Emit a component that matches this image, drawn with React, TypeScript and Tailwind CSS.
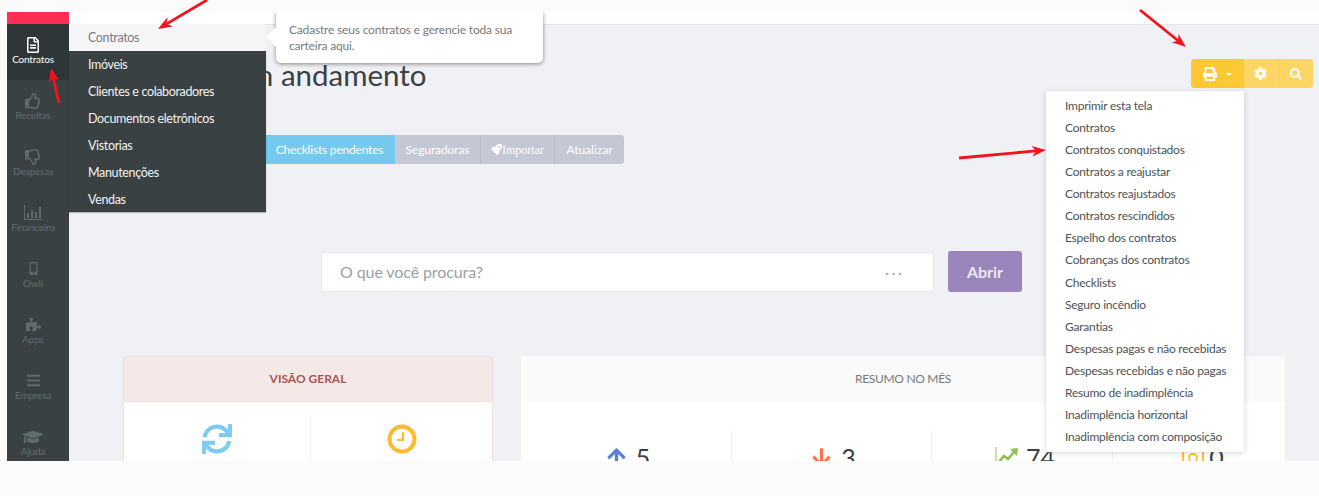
import {
  FaArrowDown,
  FaArrowUp,
  FaBars,
  FaCog,
  FaGraduationCap,
  FaMobileAlt,
  FaPrint,
  FaPuzzlePiece,
  FaRegFileAlt,
  FaRegThumbsDown,
  FaRegThumbsUp,
  FaRocket,
  FaSearch,
  FaSync,
} from "react-icons/fa";

const flyoutItems = [
  "Imóveis",
  "Clientes e colaboradores",
  "Documentos eletrônicos",
  "Vistorias",
  "Manutenções",
  "Vendas",
];

const reportItems = [
  "Imprimir esta tela",
  "Contratos",
  "Contratos conquistados",
  "Contratos a reajustar",
  "Contratos reajustados",
  "Contratos rescindidos",
  "Espelho dos contratos",
  "Cobranças dos contratos",
  "Checklists",
  "Seguro incêndio",
  "Garantias",
  "Despesas pagas e não recebidas",
  "Despesas recebidas e não pagas",
  "Resumo de inadimplência",
  "Inadimplência horizontal",
  "Inadimplência com composição",
];

function BarsIcon() {
  return (
    <svg width="18" height="15" viewBox="0 0 18 15" fill="currentColor">
      <rect x="0" y="0" width="1" height="15" />
      <rect x="0" y="14" width="18" height="1" />
      <rect x="3" y="8" width="2" height="5" />
      <rect x="7" y="5" width="2" height="8" />
      <rect x="11" y="7" width="2" height="6" />
      <rect x="15" y="2" width="2" height="11" />
    </svg>
  );
}

function ClockIcon() {
  return (
    <svg width="30" height="30" viewBox="0 0 30 30" fill="none" stroke="#fdbb2d">
      <circle cx="15" cy="15" r="12.5" strokeWidth="4" />
      <path d="M16 8v8h-6" strokeWidth="2.2" />
    </svg>
  );
}

function TrendIcon() {
  return (
    <svg className="-mr-[2px] ml-[2px]" width="24" height="20" viewBox="0 0 24 20" fill="none">
      <rect x="0" y="0" width="2" height="20" fill="#c9dfa8" />
      <path d="M4 15l5-6 4 3 6-7" stroke="#8cc152" strokeWidth="2.6" />
      <polygon points="15,2 23,1 22,9" fill="#8cc152" />
    </svg>
  );
}

function MoneyIcon() {
  return (
    <svg className="-mr-[4px] ml-[4px]" width="22" height="20" viewBox="0 0 22 20" fill="none" stroke="#fdc02f" strokeWidth="2.2">
      <path d="M1 1v18h6M21 1v18h-6" />
      <circle cx="11" cy="11" r="4" strokeWidth="1.8" />
    </svg>
  );
}

function RedArrow({ x1, y1, x2, y2 }: { x1: number; y1: number; x2: number; y2: number }) {
  const angle = Math.atan2(y2 - y1, x2 - x1);
  const len = 15;
  const spread = 0.36;
  const a = [x2 - len * Math.cos(angle - spread), y2 - len * Math.sin(angle - spread)];
  const b = [x2 - len * Math.cos(angle + spread), y2 - len * Math.sin(angle + spread)];
  const n = [x2 - 10 * Math.cos(angle), y2 - 10 * Math.sin(angle)];
  return (
    <g>
      <line x1={x1} y1={y1} x2={n[0]} y2={n[1]} stroke="#f5121c" strokeWidth="2.8" />
      <polygon points={`${x2},${y2} ${a[0]},${a[1]} ${n[0]},${n[1]} ${b[0]},${b[1]}`} fill="#f5121c" />
    </g>
  );
}

function SidebarItem({ icon, label, active }: { icon: React.ReactNode; label: string; active?: boolean }) {
  return (
    <div
      className={
        active
          ? "flex h-14 flex-col items-center bg-[#2f3638] pr-[10px] pt-[12px] text-white"
          : "flex h-14 flex-col items-center pr-[10px] pt-[12px] text-[#5f6c6f]"
      }
    >
      <div className="flex h-[17px] items-center justify-center">{icon}</div>
      <span className="-mt-px text-[10px] leading-[14px] tracking-[-0.2px]">{label}</span>
    </div>
  );
}

function Stat({ icon, value, width, border }: { icon: React.ReactNode; value: string; width: string; border?: boolean }) {
  return (
    <div className={`flex h-[60px] items-start justify-center gap-[9px] pl-[4px] pt-[7px] ${width} ${border ? "border-l border-[#f0f0f0]" : ""}`}>
      <div className="flex h-[38px] items-center">{icon}</div>
      <span className="text-[25px] leading-[38px] text-[#3a4143]">{value}</span>
    </div>
  );
}

export default function App() {
  return (
    <div className="relative h-[496px] w-full overflow-hidden bg-[#fbfbfb] pl-[7px] pt-3 font-[Lato,sans-serif]">
      <div className="flex h-[449px] overflow-hidden">
        <aside className="w-[62px] shrink-0 bg-[#3a4143]">
          <div className="h-3 bg-[#ff2e55]" />
          <SidebarItem active icon={<FaRegFileAlt size={16} />} label="Contratos" />
          <SidebarItem icon={<FaRegThumbsUp size={16} />} label="Receitas" />
          <SidebarItem icon={<FaRegThumbsDown size={16} />} label="Despesas" />
          <SidebarItem icon={<BarsIcon />} label="Financeiro" />
          <SidebarItem icon={<FaMobileAlt size={13} />} label="Owli" />
          <SidebarItem icon={<FaPuzzlePiece size={15} />} label="Apps" />
          <SidebarItem icon={<FaBars size={15} />} label="Empresa" />
          <SidebarItem icon={<FaGraduationCap size={20} />} label="Ajuda" />
        </aside>

        <main className="relative min-w-0 flex-1 bg-[#f0f1f4]">
          <div className="h-[13px] border-b border-[#e6e6e6] bg-white" />

          <div className="pl-[54px] pr-[34px]">
            <div className="mt-[31px] flex h-10 items-start justify-between">
              <h1 className="-ml-[25px] -mt-px text-[29.5px] leading-10 text-[#3a4143]">Contratos em andamento</h1>
              <div className="-mr-[28px] mt-[3px] flex h-[29px] overflow-hidden rounded-[3px] text-white">
                <div className="flex w-[53px] items-center justify-center gap-[9px] bg-[#fcc935]">
                  <FaPrint size={14} />
                  <span className="mt-[2px] border-x-[3px] border-t-[3px] border-x-transparent border-t-white" />
                </div>
                <div className="flex w-[35px] items-center justify-center bg-[#ffd666] pr-[2px]">
                  <FaCog size={13} />
                </div>
                <div className="flex w-[34px] items-center justify-center border-l border-[#fcd05a] bg-[#ffd666] pr-[2px]">
                  <FaSearch size={12} />
                </div>
              </div>
            </div>

            <div className="mt-[39px] flex h-[29px] w-[501px] overflow-hidden rounded-[3px] text-[12px] text-white">
              <div className="flex w-[143px] items-center justify-center bg-[#74c9ee]">Em andamento</div>
              <div className="flex w-[129px] items-center justify-center bg-[#74c9ee] pr-[2px] tracking-[-0.2px]">Checklists pendentes</div>
              <div className="flex w-[86px] items-center justify-center border-r border-[#b8bdca] bg-[#c3c8d4] tracking-[-0.1px]">Seguradoras</div>
              <div className="flex w-[74px] items-center justify-center border-r border-[#b8bdca] bg-[#c3c8d4]">
                <FaRocket size={11} />
                <span className="font-['Liberation_Serif',serif]">Importar</span>
              </div>
              <div className="flex w-[69px] items-center justify-center bg-[#c3c8d4]">Atualizar</div>
            </div>

            <div className="ml-[198px] mt-[87px] flex items-start gap-[14px]">
              <div className="mt-px flex h-10 w-[613px] items-center justify-between rounded-[3px] border border-[#e8e8e8] bg-white pl-[18px] pr-[28px] text-[16px] tracking-[-0.1px] text-[#9a9fa3]">
                <span>O que você procura?</span>
                <span className="text-[14px] tracking-[3px]">···</span>
              </div>
              <div className="flex h-[41px] w-[74px] items-center justify-center rounded-[3px] bg-[#9a86bc] text-[16px] font-bold text-[#ece8f3]">
                Abrir
              </div>
            </div>

            <div className="mt-16 flex gap-[28px]">
              <section className="w-[370px] rounded-t-[3px] border-x border-t border-[#f2dedd] bg-white">
                <div className="flex h-[45px] items-center justify-center border-b border-[#f2dedd] bg-[#f5e9e8] text-[12px] font-bold text-[#a9564f]">
                  VISÃO GERAL
                </div>
                <div className="flex pt-[13px]">
                  <div className="flex w-[186px] justify-center pt-[9px]">
                    <FaSync size={30} color="#7ecbf0" />
                  </div>
                  <div className="flex h-[60px] flex-1 justify-center border-l border-[#f0f0f0] pt-[9px]">
                    <ClockIcon />
                  </div>
                </div>
              </section>

              <section className="flex-1 bg-white">
                <div className="flex h-[45px] items-center justify-center bg-[#fafafa] text-[12px] tracking-[-0.3px] text-[#77797b]">
                  RESUMO NO MÊS
                </div>
                <div className="flex pt-[30px]">
                  <Stat width="w-[210px]" icon={<FaArrowUp size={21} color="#5b7fdc" />} value="5" />
                  <Stat width="w-[200px]" border icon={<FaArrowDown size={21} color="#fd7350" />} value="3" />
                  <Stat width="w-[181px]" border icon={<TrendIcon />} value="74" />
                  <Stat width="w-[173px]" border icon={<MoneyIcon />} value="0" />
                </div>
              </section>
            </div>
          </div>

          {/* flyout do menu lateral */}
          <div className="absolute left-0 top-3 w-[197px] text-[12.5px] tracking-[-0.35px]">
            <div className="flex h-[27px] items-center bg-[#f6f6f8] pl-[19px] pt-px text-[#7a7d80]">Contratos</div>
            <div className="h-[161px] bg-[#3a4143] pt-px shadow-[0_1px_1px_rgba(0,0,0,0.25)]">
              {flyoutItems.map((item) => (
                <div key={item} className="flex h-[27px] items-center pl-[19px] text-[#f2f2f2]">
                  {item}
                </div>
              ))}
            </div>
          </div>

          {/* tooltip */}
          <div className="absolute left-[207px] top-0 h-[51px] w-[267px] rounded-b-[5px] bg-white px-[13px] pt-[10px] text-[12px] leading-4 tracking-[-0.18px] text-[#777a7d] shadow-[0_1px_4px_rgba(0,0,0,0.45)]">
            <span className="absolute -left-[7px] top-[18px] h-[14px] w-[14px] rotate-45 bg-white" />
            <span className="relative">Cadastre seus contratos e gerencie toda sua carteira aqui.</span>
          </div>

          {/* dropdown de relatórios */}
          <div className="absolute left-[977px] top-[79px] h-[361px] w-[198px] bg-white pb-[4px] pl-[19px] pt-[4px] text-[12px] tracking-[-0.23px] text-[#4d5256] shadow-[0_1px_5px_rgba(60,70,100,0.22)]">
            {reportItems.map((item) => (
              <div key={item} className="flex h-[22.07px] items-center">
                {item}
              </div>
            ))}
          </div>
        </main>
      </div>

      <svg className="pointer-events-none absolute left-0 top-0" width="1319" height="496">
        <RedArrow x1={207} y1={0} x2={158} y2={29} />
        <RedArrow x1={59} y1={103} x2={51} y2={68} />
        <RedArrow x1={1140} y1={10} x2={1186} y2={47} />
        <RedArrow x1={959} y1={158} x2={1046} y2={150} />
      </svg>
    </div>
  );
}
